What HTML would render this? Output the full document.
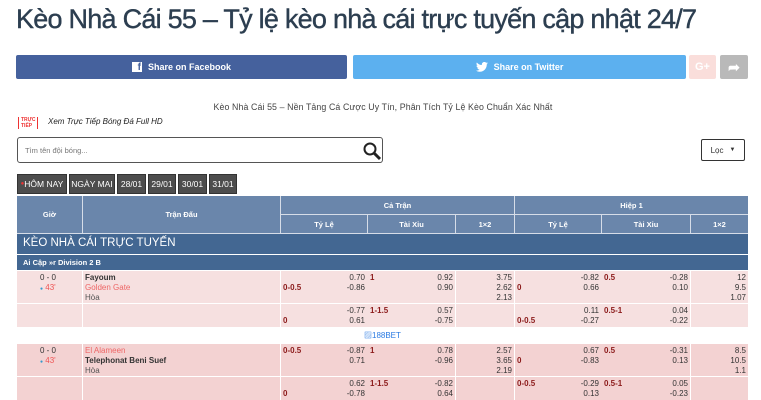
<!DOCTYPE html>
<html><head><meta charset="utf-8"><style>
*{margin:0;padding:0;box-sizing:border-box}
body{width:761px;height:400px;overflow:hidden;background:#fff;font-family:"Liberation Sans","Noto Sans CJK SC",sans-serif;position:relative;color:#333}
.a{position:absolute}
h1{position:absolute;left:16px;top:4px;font-size:27px;font-weight:normal;color:#2c3e50;white-space:nowrap;letter-spacing:-0.75px;-webkit-text-stroke:0.4px #2c3e50}
.btn{position:absolute;top:55px;height:24px;border-radius:2px;color:#fff;font-size:9px;font-weight:bold;display:flex;align-items:center;justify-content:center;gap:6px}
.tab{position:absolute;top:174px;height:20px;background:#4d4d4d;color:#fff;font-size:8.5px;display:flex;align-items:center;justify-content:center;border:1px solid #333}
.h{position:absolute;background:#6a86ab;color:#fff;font-size:7.5px;font-weight:bold;display:flex;align-items:center;justify-content:center}
.c{position:absolute;font-size:8px;line-height:10px}
.r{text-align:right}
.red{color:#8b1a1a;font-weight:bold}
</style></head><body>
<h1>Kèo Nhà Cái 55 – Tỷ lệ kèo nhà cái trực tuyến cập nhật 24/7</h1>
<div class="btn" style="left:16px;width:331px;background:#45619d"><span style="background:#fff;color:#45619d;width:10px;height:10px;display:inline-block;font-size:10px;line-height:11px;text-align:right;padding-right:1px">f</span>Share on Facebook</div>
<div class="btn" style="left:353px;width:333px;background:#5cb0ef"><svg width="12" height="10" viewBox="0 0 24 20"><path fill="#fff" d="M24 2.4a10 10 0 0 1-2.8.8A5 5 0 0 0 23.3.4a10 10 0 0 1-3.1 1.2A4.9 4.9 0 0 0 11.8 6 14 14 0 0 1 1.7.9a4.9 4.9 0 0 0 1.5 6.6A4.9 4.9 0 0 1 1 6.9a4.9 4.9 0 0 0 3.9 4.8 4.9 4.9 0 0 1-2.2.1 4.9 4.9 0 0 0 4.6 3.4A9.9 9.9 0 0 1 0 17.2 14 14 0 0 0 7.5 19.4c9.1 0 14-7.5 14-14v-.6A10 10 0 0 0 24 2.4z"/></svg>Share on Twitter</div>
<div class="btn" style="left:689px;width:27px;background:#fadedb;font-size:11px;color:#fff">G+</div>
<div class="btn" style="left:720px;width:28px;background:#b9b9b9;font-size:14px">➦</div>
<div class="a" style="left:208px;top:102px;font-size:8.8px;color:#444;width:350px;text-align:center;white-space:nowrap;letter-spacing:0.1px">Kèo Nhà Cái 55 – Nền Tảng Cá Cược Uy Tín, Phân Tích Tỷ Lệ Kèo Chuẩn Xác Nhất</div>
<div class="a" style="left:18px;top:117px;font-size:5px;color:#e33;font-weight:bold;line-height:6px;border-left:1px solid #e33;border-right:1px solid #e33;padding:0 2px">TRỰC<br>TIẾP</div>
<div class="a" style="left:48px;top:117px;font-size:8px;font-style:italic;color:#222">Xem Trực Tiếp Bóng Đá Full HD</div>
<div class="a" style="left:17px;top:137px;width:366px;height:26px;border:1px solid #555;border-radius:3px"></div>
<div class="a" style="left:25px;top:146px;font-size:7.5px;color:#777">Tìm tên đội bóng...</div>
<svg class="a" style="left:362px;top:141px" width="20" height="20"><circle cx="8" cy="8" r="5.5" fill="none" stroke="#222" stroke-width="2"/><line x1="12" y1="12" x2="18" y2="18" stroke="#222" stroke-width="3"/></svg>
<div class="a" style="left:701px;top:139px;width:44px;height:22px;border:1px solid #333;border-radius:2px;font-size:8px;display:flex;align-items:center;justify-content:center;gap:6px">Lọc <span style="font-size:6px">▼</span></div>
<div class="tab" style="left:17px;width:50px"><span style="color:#e33;font-size:6px">●</span>HÔM NAY</div>
<div class="tab" style="left:69px;width:46px">NGÀY MAI</div>
<div class="tab" style="left:117px;width:29px">28/01</div>
<div class="tab" style="left:148px;width:28px">29/01</div>
<div class="tab" style="left:178px;width:29px">30/01</div>
<div class="tab" style="left:209px;width:28px">31/01</div>
<div class="a" style="left:17px;top:196px;width:731px;height:38px;background:#d6dde8"></div>
<div class="h" style="left:17px;top:196px;width:65px;height:37px">Giờ</div>
<div class="h" style="left:83px;top:196px;width:197px;height:37px">Trận Đấu</div>
<div class="h" style="left:281px;top:196px;width:233px;height:18px">Cả Trận</div>
<div class="h" style="left:515px;top:196px;width:233px;height:18px">Hiệp 1</div>
<div class="h" style="left:281px;top:215px;width:86px;height:18px">Tỷ Lệ</div>
<div class="h" style="left:368px;top:215px;width:87px;height:18px">Tài Xỉu</div>
<div class="h" style="left:456px;top:215px;width:58px;height:18px">1×2</div>
<div class="h" style="left:515px;top:215px;width:86px;height:18px">Tỷ Lệ</div>
<div class="h" style="left:602px;top:215px;width:88px;height:18px">Tài Xỉu</div>
<div class="h" style="left:691px;top:215px;width:57px;height:18px">1×2</div>
<div class="a" style="left:17px;top:234px;width:731px;height:20px;background:#436792;color:#fff;font-size:11.5px;padding:3px 6px">KÈO NHÀ CÁI TRỰC TUYẾN</div>
<div class="a" style="left:17px;top:255px;width:731px;height:15px;background:#436792;color:#fff;font-size:7.5px;font-weight:bold;padding:3px 6px">Ai Cập »r Division 2 B</div>

<div class="a" style="left:17px;top:270px;width:731px;height:57px;background:#fff"></div>
<div class="a" style="left:17px;top:271px;width:731px;height:32px;background:#f6e0e0"></div>
<div class="a" style="left:17px;top:304px;width:731px;height:23px;background:#f6e0e0"></div>
<div class="a" style="left:17px;top:343px;width:731px;height:57px;background:#fff"></div>
<div class="a" style="left:17px;top:344px;width:731px;height:32px;background:#f3d2d2"></div>
<div class="a" style="left:17px;top:377px;width:731px;height:23px;background:#f3d2d2"></div>
<div class="a" style="left:82px;top:270px;width:1px;height:57px;background:#fff"></div>
<div class="a" style="left:280px;top:270px;width:1px;height:57px;background:#fff"></div>
<div class="a" style="left:455px;top:270px;width:1px;height:57px;background:#fff"></div>
<div class="a" style="left:514px;top:270px;width:1px;height:57px;background:#fff"></div>
<div class="a" style="left:690px;top:270px;width:1px;height:57px;background:#fff"></div>
<div class="a" style="left:82px;top:343px;width:1px;height:57px;background:#fff"></div>
<div class="a" style="left:280px;top:343px;width:1px;height:57px;background:#fff"></div>
<div class="a" style="left:455px;top:343px;width:1px;height:57px;background:#fff"></div>
<div class="a" style="left:514px;top:343px;width:1px;height:57px;background:#fff"></div>
<div class="a" style="left:690px;top:343px;width:1px;height:57px;background:#fff"></div>

<div class="c" style="left:40px;top:273px">0 - 0<br><span style="color:#e55"><span style="color:#39c;font-size:5px">●</span> 43'</span></div>
<div class="c" style="left:85px;top:273px"><b>Fayoum</b><br><span style="color:#e66">Golden Gate</span><br><span style="color:#555">Hòa</span></div>
<div class="c red" style="left:283px;top:283px">0-0.5</div>
<div class="c r" style="left:320px;top:273px;width:45px">0.70<br>-0.86</div>
<div class="c red" style="left:370px;top:273px">1</div>
<div class="c r" style="left:400px;top:273px;width:53px">0.92<br>0.90</div>
<div class="c r" style="left:460px;top:273px;width:52px">3.75<br>2.62<br>2.13</div>
<div class="c red" style="left:517px;top:283px">0</div>
<div class="c r" style="left:550px;top:273px;width:49px">-0.82<br>0.66</div>
<div class="c red" style="left:604px;top:273px">0.5</div>
<div class="c r" style="left:630px;top:273px;width:58px">-0.28<br>0.10</div>
<div class="c r" style="left:700px;top:273px;width:46px">12<br>9.5<br>1.07</div>

<div class="c red" style="left:283px;top:316px">0</div>
<div class="c r" style="left:320px;top:306px;width:45px">-0.77<br>0.61</div>
<div class="c red" style="left:370px;top:306px">1-1.5</div>
<div class="c r" style="left:400px;top:306px;width:53px">0.57<br>-0.75</div>
<div class="c red" style="left:517px;top:316px">0-0.5</div>
<div class="c r" style="left:550px;top:306px;width:49px">0.11<br>-0.27</div>
<div class="c red" style="left:604px;top:306px">0.5-1</div>
<div class="c r" style="left:630px;top:306px;width:58px">0.04<br>-0.22</div>

<div class="a" style="left:364px;top:330px;font-size:8px;color:#2a7ae2">▨188BET</div>

<div class="c" style="left:40px;top:346px">0 - 0<br><span style="color:#e55"><span style="color:#39c;font-size:5px">●</span> 43'</span></div>
<div class="c" style="left:85px;top:346px"><span style="color:#e66">El Alameen</span><br><b>Telephonat Beni Suef</b><br><span style="color:#555">Hòa</span></div>
<div class="c red" style="left:283px;top:346px">0-0.5</div>
<div class="c r" style="left:320px;top:346px;width:45px">-0.87<br>0.71</div>
<div class="c red" style="left:370px;top:346px">1</div>
<div class="c r" style="left:400px;top:346px;width:53px">0.78<br>-0.96</div>
<div class="c r" style="left:460px;top:346px;width:52px">2.57<br>3.65<br>2.19</div>
<div class="c red" style="left:517px;top:356px">0</div>
<div class="c r" style="left:550px;top:346px;width:49px">0.67<br>-0.83</div>
<div class="c red" style="left:604px;top:346px">0.5</div>
<div class="c r" style="left:630px;top:346px;width:58px">-0.31<br>0.13</div>
<div class="c r" style="left:700px;top:346px;width:46px">8.5<br>10.5<br>1.1</div>

<div class="c red" style="left:283px;top:389px">0</div>
<div class="c r" style="left:320px;top:379px;width:45px">0.62<br>-0.78</div>
<div class="c red" style="left:370px;top:379px">1-1.5</div>
<div class="c r" style="left:400px;top:379px;width:53px">-0.82<br>0.64</div>
<div class="c red" style="left:517px;top:379px">0-0.5</div>
<div class="c r" style="left:550px;top:379px;width:49px">-0.29<br>0.13</div>
<div class="c red" style="left:604px;top:379px">0.5-1</div>
<div class="c r" style="left:630px;top:379px;width:58px">0.05<br>-0.23</div>
</body></html>
